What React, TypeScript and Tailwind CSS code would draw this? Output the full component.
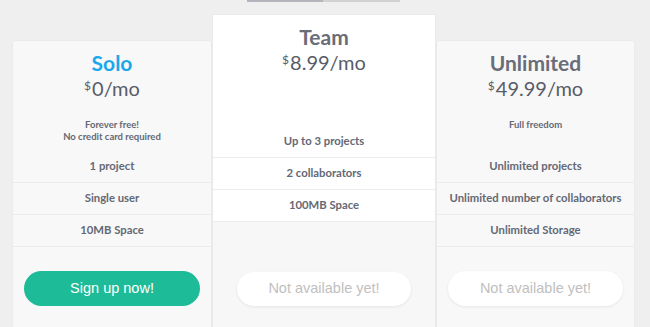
import React from "react";

const feat = "text-[11.3px] font-bold text-[#646874] text-center h-[32px] flex items-center justify-center border-t border-[#ececec]";
const first = "text-[11.3px] font-bold text-[#646874] text-center h-[32px] flex items-center justify-center border-t border-transparent";

function Price({ v }: { v: string }) {
  return (
    <div className="flex items-start justify-center text-[#585c67] font-normal">
      <span className="text-[12px] leading-none mt-[2px] mr-[1px]">$</span>
      <span className="text-[20px] leading-none">{v}/mo</span>
    </div>
  );
}

const btnFont = { fontFamily: "'Liberation Sans', Arial, sans-serif" };

export default function App() {
  return (
    <div className="w-[650px] h-[327px] overflow-hidden bg-[#efefef] relative" style={{ fontFamily: "Lato, 'Open Sans', sans-serif" }}>
      <div className="flex h-[2px]">
        <div className="ml-[247px] w-[76px] h-[2px] bg-[#b4b4bc]" />
        <div className="w-[77px] h-[2px] bg-[#d2d2d2]" />
      </div>
      <div className="flex px-3">
        {/* Solo */}
        <div className="w-[200px] mt-[38px] h-[400px] bg-[#f8f8f8] border border-[#ebebeb] rounded-t-[3px] flex flex-col">
          <div className="h-[109px] flex flex-col items-center">
            <div className="mt-[10px] text-[21px] font-bold text-[#1aa8ea] leading-[24px]">Solo</div>
            <div className="mt-[3px]"><Price v="0" /></div>
            <div className="mt-[21px] text-[9.5px] font-bold text-[#646874] leading-[12px] text-center">Forever free!<br />No credit card required</div>
          </div>
          <div className={first}>1 project</div>
          <div className={feat}>Single user</div>
          <div className={feat}>10MB Space</div>
          <div className="border-t border-[#ececec] px-[11px] pt-[24px]">
            <div className="h-[35px] rounded-full bg-[#1dbb97] flex items-center justify-center text-white text-[14.5px]" style={btnFont}>Sign up now!</div>
          </div>
        </div>
        {/* Team */}
        <div className="w-[224px] mt-[12px] h-[400px] bg-[#f7f7f7] border border-[#e9e9e9] rounded-t-[3px] flex flex-col">
          <div className="bg-white">
            <div className="h-[110px] flex flex-col items-center">
              <div className="mt-[10px] text-[21px] font-bold text-[#696d78] leading-[24px]">Team</div>
              <div className="mt-[3px]"><Price v="8.99" /></div>
            </div>
            <div className={first}>Up to 3 projects</div>
            <div className={feat}>2 collaborators</div>
            <div className={feat}>100MB Space</div>
          </div>
          <div className="border-t border-[#ececec] pl-[24px] pr-[24px] pt-[50px]">
            <div className="h-[34px] rounded-full bg-white shadow-[0_1px_3px_rgba(0,0,0,0.08)] flex items-center justify-center text-[#c0c0c0] text-[14.5px]" style={btnFont}>Not available yet!</div>
          </div>
        </div>
        {/* Unlimited */}
        <div className="w-[199px] mt-[38px] h-[400px] bg-[#f8f8f8] border border-[#ebebeb] rounded-t-[3px] flex flex-col">
          <div className="h-[109px] flex flex-col items-center">
            <div className="mt-[10px] text-[21px] font-bold text-[#696d78] leading-[24px]">Unlimited</div>
            <div className="mt-[3px]"><Price v="49.99" /></div>
            <div className="mt-[21px] text-[9.5px] font-bold text-[#646874] leading-[12px] text-center">Full freedom</div>
          </div>
          <div className={first}>Unlimited projects</div>
          <div className={feat}>Unlimited number of collaborators</div>
          <div className={feat}>Unlimited Storage</div>
          <div className="border-t border-[#ececec] px-[11px] pt-[24px]">
            <div className="h-[35px] rounded-full bg-white shadow-[0_1px_3px_rgba(0,0,0,0.08)] flex items-center justify-center text-[#c0c0c0] text-[14.5px]" style={btnFont}>Not available yet!</div>
          </div>
        </div>
      </div>
    </div>
  );
}
